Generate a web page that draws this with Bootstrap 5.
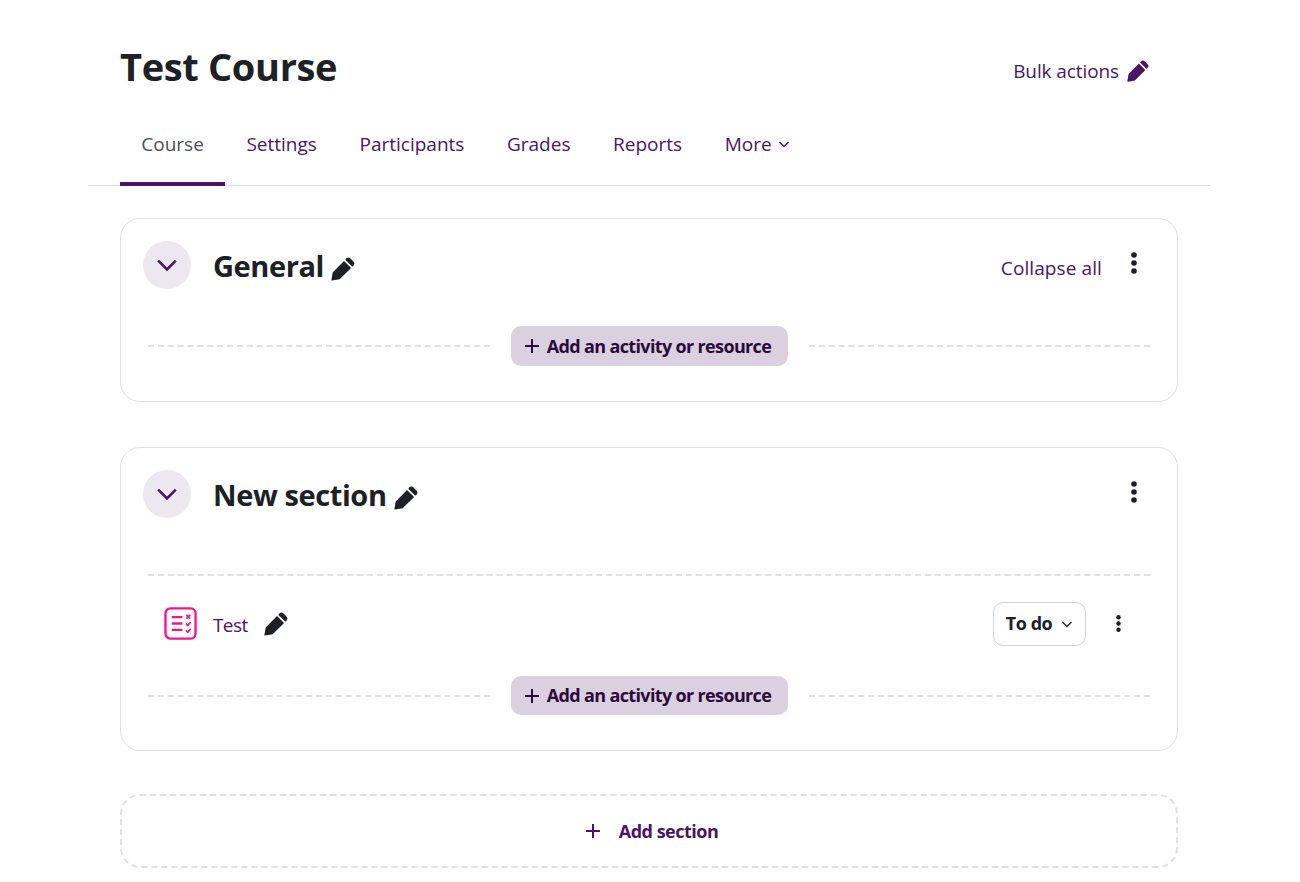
<!DOCTYPE html>
<html lang="en">
<head>
  <meta charset="UTF-8">
  <meta name="viewport" content="width=device-width, initial-scale=1.0">
  <title>Test Course</title>
  <link href="https://cdn.jsdelivr.net/npm/bootstrap@5.3.0/dist/css/bootstrap.min.css" rel="stylesheet">
  <style>
    body { font-family: "Open Sans", "Noto Sans", sans-serif; color: #1d2125; background: #fff; font-size: 19px; letter-spacing: -0.1px; }
    a { text-decoration: none; color: #4b1466; }
    .page-wrap { margin: 0 90px 0 88px; }
    .head-row { padding: 39px 61px 0 32px; height: 128px; }
    .course-title { font-size: 38px; font-weight: 700; margin: 0; line-height: 54px; letter-spacing: -0.35px; }
    .bulk-link { margin-top: 14px; }
    .bulk-link .pencil { width: 22px; height: 22px; fill: #4b1466; }
    .tab-bar { border-bottom: 1px solid #dee2e6; padding: 0 32px; height: 58px; }
    .tab-bar .nav-link { padding: 1px 21.3px 0; height: 58px; line-height: 30px; color: #4b1466; letter-spacing: 0; }
    .tab-bar .nav-link.active { color: #495057; border-bottom: 4px solid #4b1466; margin-bottom: -1px; }
    .tab-bar svg { width: 12px; height: 12px; margin-left: 1px; vertical-align: 1px; }
    .content-wrap { padding: 32px 32px 0; }
    .section-box { border: 1px solid #dee2e6; border-radius: 20px; padding: 22px 27px 0 22px; margin-bottom: 45px; }
    .box-general { height: 184px; }
    .box-new { height: 304px; margin-bottom: 43px; }
    .toggle-dot { width: 48px; height: 48px; border-radius: 50%; background: #ede8f0; flex: none; }
    .toggle-dot svg { width: 22px; height: 22px; }
    .section-title { font-size: 29px; font-weight: 700; margin: 0 0 0 22px; height: 48px; line-height: 50px; letter-spacing: -0.4px; }
    .pencil { width: 24px; height: 24px; fill: #1d2125; }
    .pencil-title { margin-left: 7px; }
    .dots { width: 6px; height: 24px; fill: #1d2125; }
    .dots-head { margin-top: 10px; margin-right: 13px; }
    .dots-item { width: 5px; height: 19px; margin: 0 29px 0 30px; }
    .collapse-link { margin-top: 9px; margin-right: 29px; letter-spacing: 0.1px; }
    .dash-line { flex: 1; border-top: 2px dashed #dee2e6; height: 0; }
    .dash-full { flex: none; margin: 56px 0 0 5px; }
    .add-row-first { margin: 37px 0 0 5px; }
    .add-row-last { margin: 5px 0 0 5px; }
    .add-btn { background: #dbd0e0; color: #2b0b3a; font-weight: 700; font-size: 18px; border-radius: 10px; height: 40px; width: 277px; margin: 0 21px 0 21px; padding: 0 3px 0 0; letter-spacing: -0.65px; }
    .add-row-last .add-btn { height: 39px; }
    .add-btn:hover { background: #dbd0e0; color: #2b0b3a; }
    .add-btn svg { width: 16px; height: 16px; margin-right: 7px; }
    .activity-row { height: 95px; padding-left: 21px; }
    .activity-name { margin-left: 16px; padding-top: 4px; letter-spacing: -0.6px; }
    .activity-pencil { margin-left: 16px; }
    .todo-btn { width: 93px; height: 44px; border: 1px solid #ced4da; border-radius: 10px; font-weight: 700; font-size: 18px; color: #1d2125; background: #fff; letter-spacing: -0.45px; padding: 0; }
    .todo-btn svg { width: 12px; height: 12px; margin-left: 9px; }
    .add-section { border: 2px dashed #dee2e6; border-radius: 20px; height: 74px; padding-left: 5px; font-weight: 700; font-size: 18px; color: #4b1466; letter-spacing: -0.5px; }
    .add-section svg { width: 16px; height: 16px; margin-right: 18px; }
  </style>
</head>
<body>
  <svg width="0" height="0" class="d-block">
    <defs>
      <symbol id="ic-pencil" viewBox="0 0 24 24">
        <path d="M14.700 3.200l6.100 6.100a.7.7 0 0 0 1 0l.6-.6a3 3 0 0 0 0-4.200l-2.900-2.900a3 3 0 0 0-4.200 0l-.6.6a.7.7 0 0 0 0 1z"/>
        <path d="M13.500 4.400l6.100 6.100a.7.7 0 0 1 0 1L8.600 22.300.9 23.600a.5.5 0 0 1-.5-.5l1.300-7.700 10.800-11a.7.7 0 0 1 1 0z"/>
      </symbol>
      <symbol id="ic-dots" viewBox="0 0 6 24">
        <circle cx="3" cy="4" r="2.800"/><circle cx="3" cy="12" r="2.800"/><circle cx="3" cy="20" r="2.800"/>
      </symbol>
    </defs>
  </svg>

  <div class="page-wrap">
    <div class="head-row d-flex justify-content-between align-items-start">
      <h1 class="course-title">Test Course</h1>
      <a href="#" class="bulk-link d-flex align-items-center gap-2 pt-1">Bulk actions
        <svg class="pencil"><use href="#ic-pencil"/></svg>
      </a>
    </div>

    <ul class="nav tab-bar">
      <li class="nav-item"><a class="nav-link active" href="#">Course</a></li>
      <li class="nav-item"><a class="nav-link" href="#">Settings</a></li>
      <li class="nav-item"><a class="nav-link" href="#">Participants</a></li>
      <li class="nav-item"><a class="nav-link" href="#">Grades</a></li>
      <li class="nav-item"><a class="nav-link" href="#">Reports</a></li>
      <li class="nav-item"><a class="nav-link" href="#">More
        <svg viewBox="0 0 12 12" fill="none" stroke="#4b1466" stroke-width="1.500"><path d="M1.500 4l4.500 4.500L10.500 4"/></svg></a></li>
    </ul>

    <div class="content-wrap">
      <div class="section-box box-general">
        <div class="d-flex align-items-start">
          <a href="#" class="toggle-dot d-flex align-items-center justify-content-center">
            <svg viewBox="0 0 20 20" fill="none" stroke="#4b1466" stroke-width="2.400"><path d="M2 6l8 8 8-8"/></svg>
          </a>
          <h3 class="section-title">General</h3>
          <svg class="pencil pencil-title flex-shrink-0 mt-3"><use href="#ic-pencil"/></svg>
          <a href="#" class="collapse-link ms-auto pt-1">Collapse all</a>
          <svg class="dots dots-head"><use href="#ic-dots"/></svg>
        </div>
        <div class="add-row-first d-flex align-items-center">
          <div class="dash-line"></div>
          <a href="#" class="btn add-btn d-flex align-items-center justify-content-center">
            <svg viewBox="0 0 16 16" fill="none" stroke="#2b0b3a" stroke-width="2"><path d="M8 1v14M1 8h14"/></svg>Add an activity or resource</a>
          <div class="dash-line"></div>
        </div>
      </div>

      <div class="section-box box-new">
        <div class="d-flex align-items-start">
          <a href="#" class="toggle-dot d-flex align-items-center justify-content-center">
            <svg viewBox="0 0 20 20" fill="none" stroke="#4b1466" stroke-width="2.400"><path d="M2 6l8 8 8-8"/></svg>
          </a>
          <h3 class="section-title">New section</h3>
          <svg class="pencil pencil-title flex-shrink-0 mt-3"><use href="#ic-pencil"/></svg>
          <svg class="dots dots-head ms-auto"><use href="#ic-dots"/></svg>
        </div>
        <div class="dash-line dash-full"></div>
        <div class="activity-row d-flex align-items-center">
          <svg width="33" height="33" viewBox="0 0 34 34" fill="none" stroke="#f5148c" stroke-width="2.400" class="flex-shrink-0">
            <rect x="1.500" y="1.500" width="31" height="31" rx="5"/>
            <path d="M8 10.500h11M8 17h11M8 23.500h11"/>
            <path d="M23 8l4 4M27 8l-4 4M22.500 17l2 2 3-3.500M22.500 24l2 2 3-3.500" stroke-width="1.800"/>
          </svg>
          <a href="#" class="activity-name">Test</a>
          <svg class="pencil activity-pencil flex-shrink-0"><use href="#ic-pencil"/></svg>
          <button class="btn todo-btn ms-auto d-flex align-items-center justify-content-center">To do
            <svg viewBox="0 0 12 12" fill="none" stroke="#1d2125" stroke-width="1.300"><path d="M1.500 4l4.500 4.500L10.500 4"/></svg>
          </button>
          <svg class="dots dots-item"><use href="#ic-dots"/></svg>
        </div>
        <div class="add-row-last d-flex align-items-center">
          <div class="dash-line"></div>
          <a href="#" class="btn add-btn d-flex align-items-center justify-content-center">
            <svg viewBox="0 0 16 16" fill="none" stroke="#2b0b3a" stroke-width="2"><path d="M8 1v14M1 8h14"/></svg>Add an activity or resource</a>
          <div class="dash-line"></div>
        </div>
      </div>

      <a href="#" class="add-section d-flex align-items-center justify-content-center">
        <svg viewBox="0 0 16 16" fill="none" stroke="#4b1466" stroke-width="2"><path d="M8 1v14M1 8h14"/></svg>Add section</a>
    </div>
  </div>

  <script src="https://cdn.jsdelivr.net/npm/bootstrap@5.3.0/dist/js/bootstrap.bundle.min.js"></script>
</body>
</html>
